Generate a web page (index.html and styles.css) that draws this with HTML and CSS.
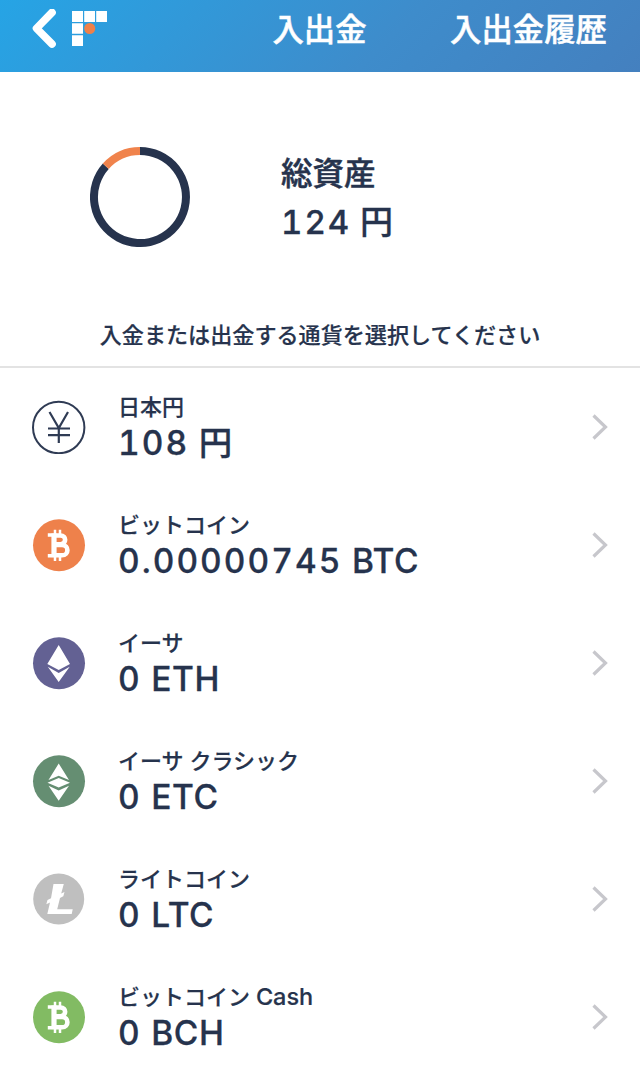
FILE: index.html
```html
<!DOCTYPE html>
<html lang="ja">

<head>
    <meta charset="UTF-8">
    <meta name="viewport" content="width=device-width, initial-scale=1.0">
    <title>入出金</title>
    <link rel="stylesheet" href="styles.css">
</head>

<body>
    <svg class="defs">
        <symbol id="btc" viewBox="0 0 54 54">
            <g fill="none" stroke="#fff">
                <path stroke-width="2.5" d="M23 11.800v5M28 11.800v5M23 38v5M28 38v5" />
                <path stroke-width="3.4" d="M15.800 17h8M15.800 37.800h8" />
                <path stroke-width="5.2" d="M22 15.500v23.600" />
                <path stroke-width="4.6" d="M22 17.500h6.500c6.200 0 6.200 8.700 0 8.700h-6M22.500 27h7.500c7.200 0 7.200 10.300 0 10.300h-8" />
            </g>
        </symbol>
        <symbol id="arrow" viewBox="0 0 18 28">
            <path fill="none" stroke="#c7c7cc" stroke-width="3.2" d="M1.500 2.500L13.500 14L1.500 25.500" />
        </symbol>
    </svg>

    <div class="header">
        <a class="back" href="#">
            <svg width="24" height="40" viewBox="0 0 24 40"><path d="M20 3.500L4.500 19.300L20 35" fill="none" stroke="#fff" stroke-width="7.600" stroke-linecap="round" stroke-linejoin="round" /></svg>
            <svg width="36" height="36" viewBox="0 0 36 36">
                <path fill="#fff" d="M0 0h11v11H0zM12.200 0h10.800v11H12.200zM24.200 0H35v11H24.200zM0 12.200h11v10.600H0zM0 24.200h11v10.800H0z" />
                <circle cx="17.700" cy="17.500" r="5.500" fill="#ef8049" />
            </svg>
        </a>
        <div class="title">入出金</div>
        <a class="history" href="#">入出金履歴</a>
    </div>

    <div class="total">
        <svg class="chart" width="100" height="100" viewBox="0 0 100 100">
            <path d="M50 4A46 46 0 1 1 15.800 19.200" fill="none" stroke="#26334d" stroke-width="8" />
            <path d="M15.800 19.200A46 46 0 0 1 50 4" fill="none" stroke="#f0834c" stroke-width="8" />
        </svg>
        <div class="total-text">
            <div class="total-label">総資産</div>
            <div class="total-value"><span class="number">124</span> 円</div>
        </div>
    </div>

    <p class="message">入金または出金する通貨を選択してください</p>

    <div class="list">
        <div class="row">
            <svg class="icon" viewBox="0 0 54 54">
                <circle cx="26.700" cy="27.500" r="25.700" fill="none" stroke="#2f3b54" stroke-width="2" />
                <path d="M17.500 12L26.800 28L36 12M26.800 28v15M16 28.500h22M16 35.100h22" fill="none" stroke="#2f3b54" stroke-width="2.200" />
            </svg>
            <div class="info">
                <div class="name">日本円</div>
                <div class="amount"><span class="number">108</span> 円</div>
            </div>
            <svg class="arrow"><use href="#arrow" /></svg>
        </div>
        <div class="row">
            <svg class="icon" viewBox="0 0 54 54">
                <circle cx="27" cy="27.300" r="26" fill="#ee814b" />
                <use href="#btc" />
            </svg>
            <div class="info">
                <div class="name">ビットコイン</div>
                <div class="amount"><span class="number">0.00000745</span> BTC</div>
            </div>
            <svg class="arrow"><use href="#arrow" /></svg>
        </div>
        <div class="row">
            <svg class="icon" viewBox="0 0 54 54">
                <circle cx="27" cy="27.300" r="26" fill="#636193" />
                <path fill="#fff" d="M26.700 9L38 28L26.700 34L15.300 28zM15.800 30.700L26.700 37L37.700 30.700L26.700 46z" />
            </svg>
            <div class="info">
                <div class="name">イーサ</div>
                <div class="amount"><span class="number">0</span> ETH</div>
            </div>
            <svg class="arrow"><use href="#arrow" /></svg>
        </div>
        <div class="row">
            <svg class="icon" viewBox="0 0 54 54">
                <circle cx="27" cy="27.300" r="26" fill="#658e72" />
                <path fill="#fff" d="M26.700 9.500L37 26L26.700 21.700L16.500 26zM26.700 24L38 28.700L26.700 33.500L15.500 28.700zM16.500 31.700L26.700 36.500L37 31.700L26.700 46.700z" />
            </svg>
            <div class="info">
                <div class="name">イーサ クラシック</div>
                <div class="amount"><span class="number">0</span> ETC</div>
            </div>
            <svg class="arrow"><use href="#arrow" /></svg>
        </div>
        <div class="row">
            <svg class="icon" viewBox="0 0 54 54">
                <circle cx="26.700" cy="27" r="25.500" fill="#bfbfbf" />
                <path fill="#fff" d="M21.500 12H31.800L29.200 21.500L32.500 20L31.300 24.300L28 26L25.200 37.300H40.700L39.700 42H15.300L18 30.500L14.300 32.200L15.500 28L19 26.200z" />
            </svg>
            <div class="info">
                <div class="name">ライトコイン</div>
                <div class="amount"><span class="number">0</span> LTC</div>
            </div>
            <svg class="arrow"><use href="#arrow" /></svg>
        </div>
        <div class="row">
            <svg class="icon" viewBox="0 0 54 54">
                <circle cx="27" cy="27.300" r="26" fill="#82bb63" />
                <use href="#btc" />
            </svg>
            <div class="info">
                <div class="name">ビットコイン <span class="latin">Cash</span></div>
                <div class="amount"><span class="number">0</span> BCH</div>
            </div>
            <svg class="arrow"><use href="#arrow" /></svg>
        </div>
    </div>
</body>

</html>
```
FILE: styles.css
```css
body {
    margin: 0;
    background: #fff;
    color: #26334d;
    font-family: Inter, "Noto Sans CJK JP", sans-serif;
    font-weight: 500;
    -webkit-text-stroke: 0.2px;
}

a {
    color: #fff;
    text-decoration: none;
}

.defs {
    display: none;
}

.header {
    display: grid;
    grid-template-columns: 1fr auto 1fr;
    align-items: center;
    height: 72px;
    padding: 0 33px 14px 32px;
    box-sizing: border-box;
    background: linear-gradient(135deg, #26a4e5 0%, #3e8ccb 60%, #4480bf 100%);
    color: #fff;
    font-size: 31.4px;
    line-height: 40px;
    -webkit-text-stroke: 0.5px;
}

.title,
.history {
    padding-top: 1px;
}

.back {
    display: flex;
    align-items: center;
    gap: 16px;
}

.history {
    text-align: right;
}

.total {
    display: flex;
    align-items: center;
    gap: 91px;
    height: 250px;
    padding-left: 90px;
}

.total-text {
    padding-top: 2px;
}

.total-label {
    font-size: 31.5px;
    line-height: 48px;
    -webkit-text-stroke: 0.5px;
}

.total-value {
    font-size: 33px;
    line-height: 48px;
    -webkit-text-stroke: 0.3px;
}

.message {
    margin: 0;
    height: 44px;
    font-size: 22.1px;
    line-height: 27px;
    text-align: center;
    border-bottom: 2px solid #e3e3e3;
}

.row {
    display: flex;
    align-items: center;
    height: 118px;
    padding: 0 30px 0 32px;
}

.icon {
    width: 54px;
    height: 54px;
    margin-right: 32px;
}

.info {
    flex: 1;
    padding-bottom: 1px;
}

.name {
    font-size: 22px;
    line-height: 32px;
}

.latin {
    font-size: 23.5px;
}

.amount {
    font-size: 33.5px;
    line-height: 40px;
    letter-spacing: 0.6px;
    -webkit-text-stroke: 0.3px;
}

.number {
    letter-spacing: 2px;
    font-variant-numeric: tabular-nums;
}

.arrow {
    width: 18px;
    height: 28px;
}
```
